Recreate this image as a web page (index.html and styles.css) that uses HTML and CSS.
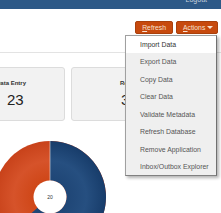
FILE: index.html
```html
<!DOCTYPE html>
<html>
<head>
<meta charset="utf-8">
<link rel="stylesheet" href="styles.css">
</head>
<body>
<div class="topbar"><span class="logout">Logout</span></div>
<div class="toolbar">
  <button class="btn"><u>R</u>efresh</button>
  <div class="actions">
    <button class="btn"><u>A</u>ctions <span class="caret"></span></button>
    <ul class="menu">
      <li class="item active">Import Data</li>
      <li class="item">Export Data</li>
      <li class="item">Copy Data</li>
      <li class="item">Clear Data</li>
      <li class="item">Validate Metadata</li>
      <li class="item">Refresh Database</li>
      <li class="item">Remove Application</li>
      <li class="item">Inbox/Outbox Explorer</li>
    </ul>
  </div>
</div>
<div class="rule"></div>
<div class="cards">
  <div class="card card-a">
    <div class="card-title">Data Entry</div>
    <div class="card-value">23</div>
  </div>
  <div class="card card-b">
    <div class="card-title">Reports</div>
    <div class="card-value">3</div>
  </div>
</div>
<div class="chart">
  <svg class="donut" width="112" height="112" viewBox="0 0 112 112">
    <defs>
      <radialGradient id="og" gradientUnits="userSpaceOnUse" cx="56" cy="56" r="56">
        <stop offset="0.3" stop-color="#cf4718"/>
        <stop offset="0.65" stop-color="#d6532a"/>
        <stop offset="1" stop-color="#c8421a"/>
      </radialGradient>
      <radialGradient id="bg" gradientUnits="userSpaceOnUse" cx="56" cy="56" r="56">
        <stop offset="0.3" stop-color="#1f4676"/>
        <stop offset="0.65" stop-color="#264f80"/>
        <stop offset="1" stop-color="#173c6a"/>
      </radialGradient>
    </defs>
    <circle cx="56" cy="56" r="56" fill="url(#og)"/>
    <path d="M56,0 A56,56 0 1 1 13.74,92.74 L43.55,66.83 A16.5,16.5 0 1 0 56,39.5 Z" fill="url(#bg)"/>
    <line x1="56" y1="0" x2="56" y2="40" stroke="#e8e0e0" stroke-width="0.6"/>
    <circle cx="56" cy="56" r="16.5" fill="#ffffff"/>
    <text x="56" y="58" text-anchor="middle" class="donut-label">20</text>
  </svg>
</div>
</body>
</html>
```
FILE: styles.css
```css
html, body {
  margin: 0;
  padding: 0;
  background: #ffffff;
  overflow: hidden;
  font-family: "Liberation Sans", Arial, sans-serif;
}
body {
  width: 221px;
  height: 213px;
}
.topbar {
  height: 9px;
  background: #2d5987;
  display: flex;
  justify-content: flex-end;
  align-items: flex-start;
  overflow: hidden;
  padding-right: 14px;
}
.logout {
  font-size: 7px;
  line-height: 7px;
  margin-top: -4px;
  color: #c9d3df;
}
.toolbar {
  display: flex;
  justify-content: flex-end;
  gap: 3px;
  margin-top: 12px;
  padding-right: 3px;
  height: 13px;
}
.btn {
  height: 13px;
  margin: 0;
  padding: 0 6px;
  border: 1px solid #a9400c;
  border-radius: 2px;
  background: #c74a0e;
  color: #f6e2d2;
  font-family: "Liberation Sans", Arial, sans-serif;
  font-size: 6.8px;
  line-height: 11px;
  display: flex;
  align-items: center;
}
.btn u {
  text-decoration: underline;
}
.actions {
  position: relative;
  display: flex;
}
.actions .btn {
  width: 42px;
  padding: 0 0 0 6px;
}
.caret {
  display: inline-block;
  width: 0;
  height: 0;
  margin-left: 2px;
  border-left: 3px solid transparent;
  border-right: 3px solid transparent;
  border-top: 3px solid #f6e2d2;
}
.menu {
  position: absolute;
  top: 14px;
  right: 1px;
  width: 90px;
  margin: 0;
  padding: 0;
  list-style: none;
  background: #efefef;
  border: 1px solid #a0a0a0;
  border-right-color: #707070;
  border-bottom-color: #808080;
  box-shadow: 2px 2px 3px rgba(0, 0, 0, 0.3);
  z-index: 5;
}
.item {
  height: 17.43px;
  line-height: 17.43px;
  padding-left: 14px;
  font-size: 6.9px;
  color: #555555;
  white-space: nowrap;
}
.item.active {
  background: #ffffff;
  color: #333333;
}
.rule {
  height: 1px;
  background: #e3e3e3;
  margin-top: 18px;
}
.cards {
  display: flex;
  gap: 6px;
  margin-top: 14px;
  margin-left: -45px;
}
.card {
  width: 110px;
  height: 54px;
  box-sizing: border-box;
  background: #f2f2f2;
  border: 1px solid #dcdcdc;
  border-radius: 3px;
  padding-top: 11px;
  flex: none;
}
.card-title {
  font-size: 6px;
  line-height: 8px;
  font-weight: bold;
  color: #333333;
  white-space: nowrap;
}
.card-value {
  font-size: 15px;
  line-height: 15px;
  margin-top: 5px;
  color: #222222;
}
.card-a {
  padding-left: 40px;
}
.card-a .card-value {
  margin-left: 11px;
}
.card-b {
  padding-left: 48px;
}
.card-b .card-value {
  margin-left: 1px;
}
.chart {
  margin-top: 20px;
  margin-left: -6px;
}
.donut {
  display: block;
}
.donut-label {
  font-family: "Liberation Sans", Arial, sans-serif;
  font-size: 5px;
  fill: #333333;
}
```
